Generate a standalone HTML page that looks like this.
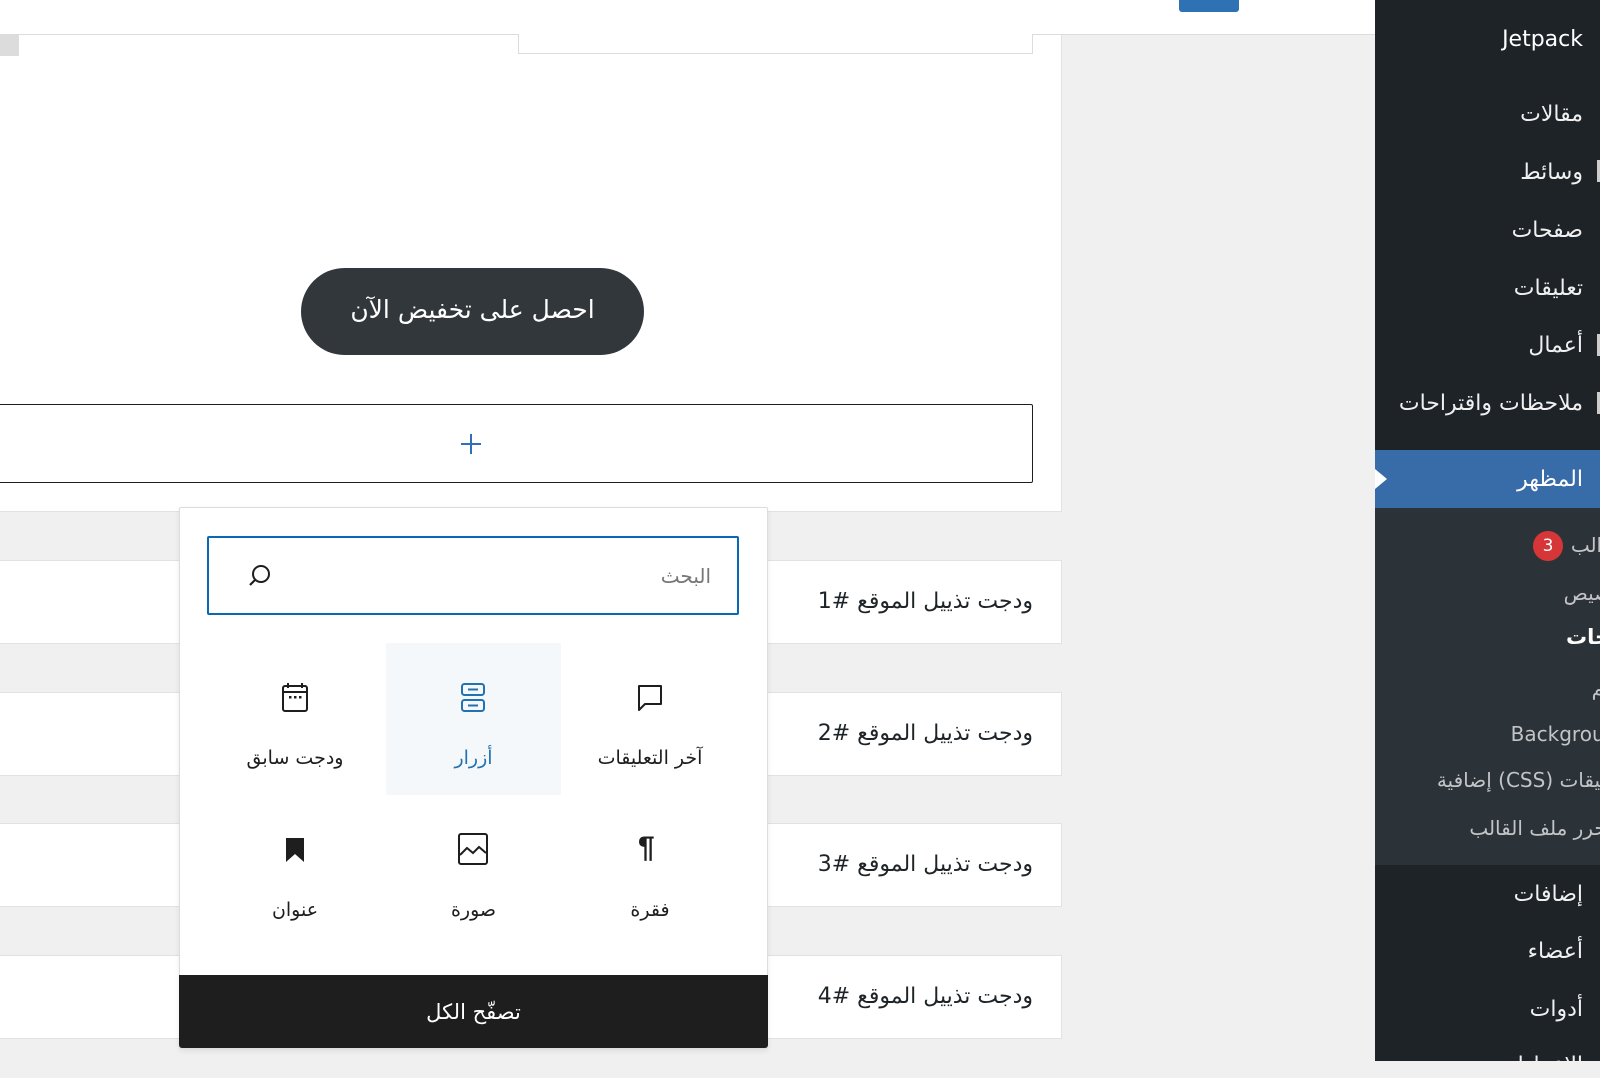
<!DOCTYPE html>
<html><head><meta charset="utf-8">
<style>
html,body{margin:0;padding:0;width:1600px;height:1061px;overflow:hidden;background:#f0f0f0;font-family:"DejaVu Sans","Liberation Sans",sans-serif;}
.abs{position:absolute;}
.r{position:absolute;white-space:nowrap;direction:rtl;}
</style></head><body>
<div class="abs" style="left:0;top:0;width:1375px;height:34px;background:#fff;border-bottom:1px solid #dcdcde;"></div>
<div class="abs" style="left:1179px;top:0;width:60px;height:12px;background:#2f72b3;border-radius:0 0 3px 3px;"></div>
<div class="abs" style="left:0;top:35px;width:1061px;height:476px;background:#fff;border-right:1px solid #e2e2e2;border-bottom:1px solid #e2e2e2;"></div>
<div class="abs" style="left:0;top:35px;width:19px;height:21px;background:#dcdcdc;"></div>
<div class="abs" style="left:518px;top:34px;width:513px;height:19px;background:#fff;border:1px solid #dcdcde;border-top:none;"></div>
<div class="abs" style="left:301px;top:268px;width:343px;height:87px;background:#32373c;border-radius:44px;"></div>
<div class="r" style="left:301px;top:268px;width:343px;height:87px;line-height:84px;text-align:center;color:#fff;font-size:25px;">احصل على تخفيض الآن</div>
<div class="abs" style="left:-2px;top:404px;width:1033px;height:77px;border:1px solid #1e1e1e;background:#fff;border-radius:2px;"></div>
<div class="abs" style="left:461px;top:443px;width:20px;height:2px;background:#3070b8;"></div>
<div class="abs" style="left:470px;top:434px;width:2px;height:20px;background:#3070b8;"></div>
<div class="abs" style="left:0;top:560px;width:1061px;height:82px;background:#fff;border:1px solid #e2e2e2;border-left:none;"></div>
<div class="abs" style="left:0;top:692px;width:1061px;height:82px;background:#fff;border:1px solid #e2e2e2;border-left:none;"></div>
<div class="abs" style="left:0;top:823px;width:1061px;height:82px;background:#fff;border:1px solid #e2e2e2;border-left:none;"></div>
<div class="abs" style="left:0;top:955px;width:1061px;height:82px;background:#fff;border:1px solid #e2e2e2;border-left:none;"></div>
<div class="r" style="right:567px;top:589px;font-size:22px;color:#1d2327;">ودجت تذييل الموقع #1</div>
<div class="r" style="right:567px;top:721px;font-size:22px;color:#1d2327;">ودجت تذييل الموقع #2</div>
<div class="r" style="right:567px;top:852px;font-size:22px;color:#1d2327;">ودجت تذييل الموقع #3</div>
<div class="r" style="right:567px;top:984px;font-size:22px;color:#1d2327;">ودجت تذييل الموقع #4</div>
<div class="abs" style="left:179px;top:507px;width:587px;height:540px;background:#fff;border:1px solid #ddd;border-radius:2px;box-shadow:0 2px 6px rgba(0,0,0,.08);"></div>
<div class="abs" style="left:207px;top:536px;width:528px;height:75px;border:2px solid #0a68b4;border-radius:2px;background:#fff;"></div>
<div class="r" style="right:889px;top:564px;font-size:20px;color:#777;">البحث</div>
<svg class="abs" style="left:246px;top:562px" width="28" height="28" viewBox="0 0 28 28"><circle cx="15" cy="12" r="8" fill="none" stroke="#1e1e1e" stroke-width="2"/><path d="M9.5 17.5 L4 23" stroke="#1e1e1e" stroke-width="2.2"/></svg>
<div class="abs" style="left:386px;top:643px;width:175px;height:152px;background:#f4f8fb;border-radius:2px;"></div>
<svg class="abs" style="left:281px;top:681px" width="28" height="32" viewBox="0 0 28 32"><rect x="2" y="5" width="24" height="25" rx="2" fill="none" stroke="#1e1e1e" stroke-width="2"/><path d="M2 11H26M7 2V7M21 2V7" stroke="#1e1e1e" stroke-width="2"/><rect x="8" y="15" width="2.5" height="2.5" fill="#1e1e1e"/><rect x="13" y="15" width="2.5" height="2.5" fill="#1e1e1e"/><rect x="18" y="15" width="2.5" height="2.5" fill="#1e1e1e"/></svg>
<svg class="abs" style="left:460px;top:682px" width="26" height="32" viewBox="0 0 26 32"><rect x="2" y="2" width="22" height="11" rx="2.5" fill="none" stroke="#2271b1" stroke-width="2"/><rect x="2" y="18" width="22" height="11" rx="2.5" fill="none" stroke="#2271b1" stroke-width="2"/><path d="M8 7.5H18M8 23.5H18" stroke="#2271b1" stroke-width="2"/></svg>
<svg class="abs" style="left:636px;top:683px" width="28" height="30" viewBox="0 0 28 30"><path d="M3 3H25V21H9L3 27Z" fill="none" stroke="#1e1e1e" stroke-width="2" stroke-linejoin="round"/></svg>
<div class="r" style="left:210px;width:170px;text-align:center;top:747px;font-size:19px;color:#1e1e1e;">ودجت سابق</div>
<div class="r" style="left:386px;width:175px;text-align:center;top:747px;font-size:19px;color:#2271b1;">أزرار</div>
<div class="r" style="left:565px;width:170px;text-align:center;top:747px;font-size:19px;color:#1e1e1e;">آخر التعليقات</div>
<svg class="abs" style="left:284px;top:836px" width="22" height="28" viewBox="0 0 22 28"><path d="M2 2H20V26L11 18L2 26Z" fill="#1e1e1e"/></svg>
<svg class="abs" style="left:457px;top:832px" width="32" height="34" viewBox="0 0 32 34"><rect x="2" y="2" width="28" height="30" rx="2" fill="none" stroke="#1e1e1e" stroke-width="2"/><path d="M3 23L10 16L16 21L22 15L29 21" fill="none" stroke="#1e1e1e" stroke-width="2"/></svg>
<div class="abs" style="left:638px;top:832px;font-size:30px;line-height:32px;font-weight:bold;color:#1e1e1e;font-family:'Liberation Sans',sans-serif;">¶</div>
<div class="r" style="left:210px;width:170px;text-align:center;top:899px;font-size:19px;color:#1e1e1e;">عنوان</div>
<div class="r" style="left:386px;width:175px;text-align:center;top:899px;font-size:19px;color:#1e1e1e;">صورة</div>
<div class="r" style="left:565px;width:170px;text-align:center;top:899px;font-size:19px;color:#1e1e1e;">فقرة</div>
<div class="abs" style="left:179px;top:975px;width:589px;height:73px;background:#1e1e1e;border-radius:0 0 3px 3px;"></div>
<div class="r" style="left:179px;width:589px;text-align:center;top:1000px;font-size:21px;color:#fff;">تصفّح الكل</div>
<div class="abs" style="left:1375px;top:0;width:225px;height:1061px;background:#1d2327;"></div>
<div class="abs" style="left:1375px;top:450px;width:225px;height:58px;background:#386ca8;"></div>
<div class="abs" style="left:1375px;top:469px;width:0;height:0;border-top:10px solid transparent;border-bottom:10px solid transparent;border-left:12px solid #fff;"></div>
<div class="abs" style="left:1375px;top:508px;width:225px;height:357px;background:#2c3338;"></div>
<div class="abs" style="left:1597px;top:160px;width:3px;height:22px;background:#ccc;"></div>
<div class="abs" style="left:1597px;top:334px;width:3px;height:22px;background:#ccc;"></div>
<div class="abs" style="left:1597px;top:392px;width:3px;height:22px;background:#ccc;"></div>
<div class="r" style="right:17px;top:27px;font-size:22px;color:#fff;">Jetpack</div>
<div class="r" style="right:17px;top:102px;font-size:22px;color:#f0f0f1;">مقالات</div>
<div class="r" style="right:17px;top:160px;font-size:22px;color:#f0f0f1;">وسائط</div>
<div class="r" style="right:17px;top:218px;font-size:22px;color:#f0f0f1;">صفحات</div>
<div class="r" style="right:17px;top:276px;font-size:22px;color:#f0f0f1;">تعليقات</div>
<div class="r" style="right:17px;top:333px;font-size:22px;color:#f0f0f1;">أعمال</div>
<div class="r" style="right:17px;top:391px;font-size:22px;color:#f0f0f1;">ملاحظات واقتراحات</div>
<div class="r" style="right:17px;top:467px;font-size:22px;color:#fff;">المظهر</div>
<div class="r" style="right:-22px;top:533px;font-size:20px;color:#c3c4c7;">قوالب</div>
<div class="abs" style="left:1533px;top:531px;width:30px;height:30px;border-radius:50%;background:#d63638;color:#fff;font-size:17px;line-height:30px;text-align:center;">3</div>
<div class="r" style="right:-30px;top:581px;font-size:20px;color:#c3c4c7;">تخصيص</div>
<div class="r" style="right:-34px;top:625px;font-size:21px;color:#fff;font-weight:bold;">ودجات</div>
<div class="r" style="right:-36px;top:676px;font-size:20px;color:#c3c4c7;">قوائم</div>
<div class="r" style="right:-30px;top:722px;font-size:20px;color:#c3c4c7;">Background</div>
<div class="r" style="right:-30px;top:768px;font-size:20px;color:#c3c4c7;">تنسيقات (CSS) إضافية</div>
<div class="r" style="right:-18px;top:816px;font-size:20px;color:#c3c4c7;">محرر ملف القالب</div>
<div class="r" style="right:17px;top:882px;font-size:22px;color:#f0f0f1;">إضافات</div>
<div class="r" style="right:17px;top:939px;font-size:22px;color:#f0f0f1;">أعضاء</div>
<div class="r" style="right:17px;top:997px;font-size:22px;color:#f0f0f1;">أدوات</div>
<div class="r" style="right:17px;top:1053px;font-size:22px;color:#f0f0f1;">الإعدادات</div>
</body></html>
